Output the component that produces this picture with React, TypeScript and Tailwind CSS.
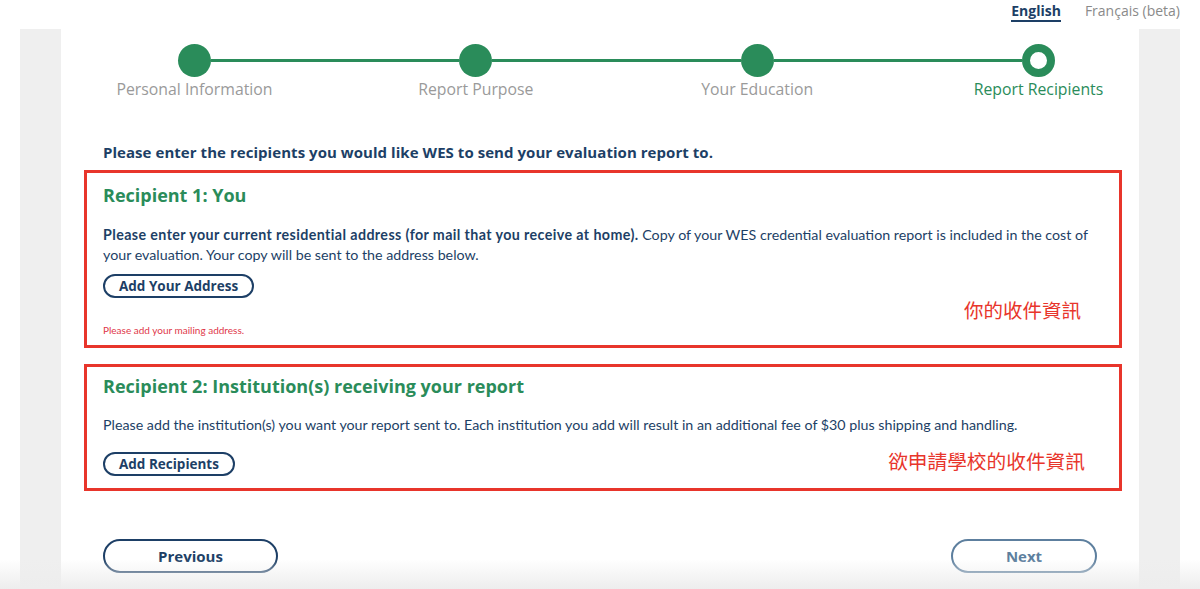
import React from "react";

const GREEN = "#2a8c5a";

function Step({ label, state }: { label: string; state: "done" | "current" }) {
  return (
    <div className="flex w-[33px] flex-col items-center">
      {state === "done" ? (
        <div className="h-[33px] w-[33px] rounded-full bg-[#2a8c5a]" />
      ) : (
        <div className="h-[33px] w-[33px] rounded-full border-[8px] border-[#2a8c5a] bg-white" />
      )}
      <div
        className={
          "mt-[3px] whitespace-nowrap text-[15.8px] leading-[18px] " +
          (state === "current" ? "text-[#2a8c5a]" : "text-[#9a9a9a]")
        }
      >
        {label}
      </div>
    </div>
  );
}

function Line() {
  return <div className="mt-[15px] h-[3px] flex-1 bg-[#2a8c5a]" />;
}

function PillButton({ children }: { children: React.ReactNode }) {
  return (
    <button className="h-[24px] rounded-full border-2 border-[#1d3f66] px-[14px] text-[13.5px] font-bold leading-[20px] text-[#1d3f66]">
      {children}
    </button>
  );
}

const bodyFont = { fontFamily: "Lato, 'Open Sans', sans-serif" };
const cjkFont = { fontFamily: "'Noto Sans CJK TC', sans-serif" };

export default function App() {
  return (
    <div
      className="relative h-[589px] w-[1200px] overflow-hidden bg-white text-[#1d3f66]"
      style={{ fontFamily: "'Open Sans', 'Noto Sans', sans-serif" }}
    >
      {/* language switcher */}
      <div className="flex h-[29px] items-start justify-end gap-[24px] pr-[20px] pt-[2px] text-[14px] leading-[18px]">
        <span className="border-b-2 border-[#1d3f66] font-bold text-[#1d3f66]">English</span>
        <span className="text-[#8a8a8a]">Français (beta)</span>
      </div>

      <div className="flex h-[560px] px-[20px]">
        <div className="w-[41px] bg-[#efefef]" />

        <main className="flex-1 bg-white">
          {/* progress stepper */}
          <div className="ml-[117px] mr-[84px] mt-[15px] flex items-start">
            <Step label="Personal Information" state="done" />
            <Line />
            <Step label="Report Purpose" state="done" />
            <Line />
            <Step label="Your Education" state="done" />
            <Line />
            <Step label="Report Recipients" state="current" />
          </div>

          <h1 className="ml-[42px] mt-[45px] text-[15px] font-bold leading-[18px] tracking-[0.05px]">
            Please enter the recipients you would like WES to send your evaluation report to.
          </h1>

          {/* recipient 1 */}
          <section className="relative ml-[23px] mr-[17px] mt-[9px] h-[178px] border-[3px] border-[#e8352b] pl-[16px] pr-[30px] pt-[10px]">
            <h2 className="text-[18px] font-bold leading-[24px]" style={{ color: GREEN }}>
              Recipient 1: You
            </h2>
            <p className="mt-[18px] text-[14.25px] leading-[20px] text-[#1d3f66]" style={bodyFont}>
              <b className="tracking-[0.4px]">
                Please enter your current residential address (for mail that you receive at home).
              </b>{" "}
              Copy of your WES credential evaluation report is included in the cost of your evaluation. Your copy will be
              sent to the address below.
            </p>
            <div className="mt-[8px]">
              <PillButton>Add Your Address</PillButton>
            </div>
            <p className="mt-[26px] text-[10px] leading-[12px] text-[#e0384a]" style={bodyFont}>
              Please add your mailing address.
            </p>
            <div
              className="absolute right-[38px] top-[124px] text-[19.5px] leading-[26px] text-[#e8352b]"
              style={cjkFont}
            >
              你的收件資訊
            </div>
          </section>

          {/* recipient 2 */}
          <section className="relative ml-[23px] mr-[17px] mt-[16px] h-[127px] border-[3px] border-[#e8352b] px-[16px] pt-[7px]">
            <h2 className="text-[18px] font-bold leading-[24px]" style={{ color: GREEN }}>
              Recipient 2: Institution(s) receiving your report
            </h2>
            <p className="mt-[17px] text-[14.25px] leading-[20px] text-[#1d3f66]" style={bodyFont}>
              Please add the institution(s) you want your report sent to. Each institution you add will result in an
              additional fee of $30 plus shipping and handling.
            </p>
            <div className="mt-[16px]">
              <PillButton>Add Recipients</PillButton>
            </div>
            <div
              className="absolute right-[34px] top-[81px] text-[19.7px] leading-[26px] text-[#e8352b]"
              style={cjkFont}
            >
              欲申請學校的收件資訊
            </div>
          </section>

          {/* navigation */}
          <div className="ml-[42px] mr-[42px] mt-[48px] flex justify-between">
            <button className="h-[34px] w-[175px] rounded-full border-2 border-[#1d3f66] text-[15px] font-bold text-[#1d3f66]">
              Previous
            </button>
            <button className="h-[34px] w-[146px] rounded-full border-2 border-[#5d7f9e] text-[15px] font-bold text-[#5d7f9e]">
              Next
            </button>
          </div>
        </main>

        <div className="w-[41px] bg-[#efefef]" />
      </div>

      {/* bottom fade */}
      <div className="pointer-events-none absolute bottom-0 left-0 h-[30px] w-full bg-gradient-to-b from-transparent to-[#ededed]" />
    </div>
  );
}
